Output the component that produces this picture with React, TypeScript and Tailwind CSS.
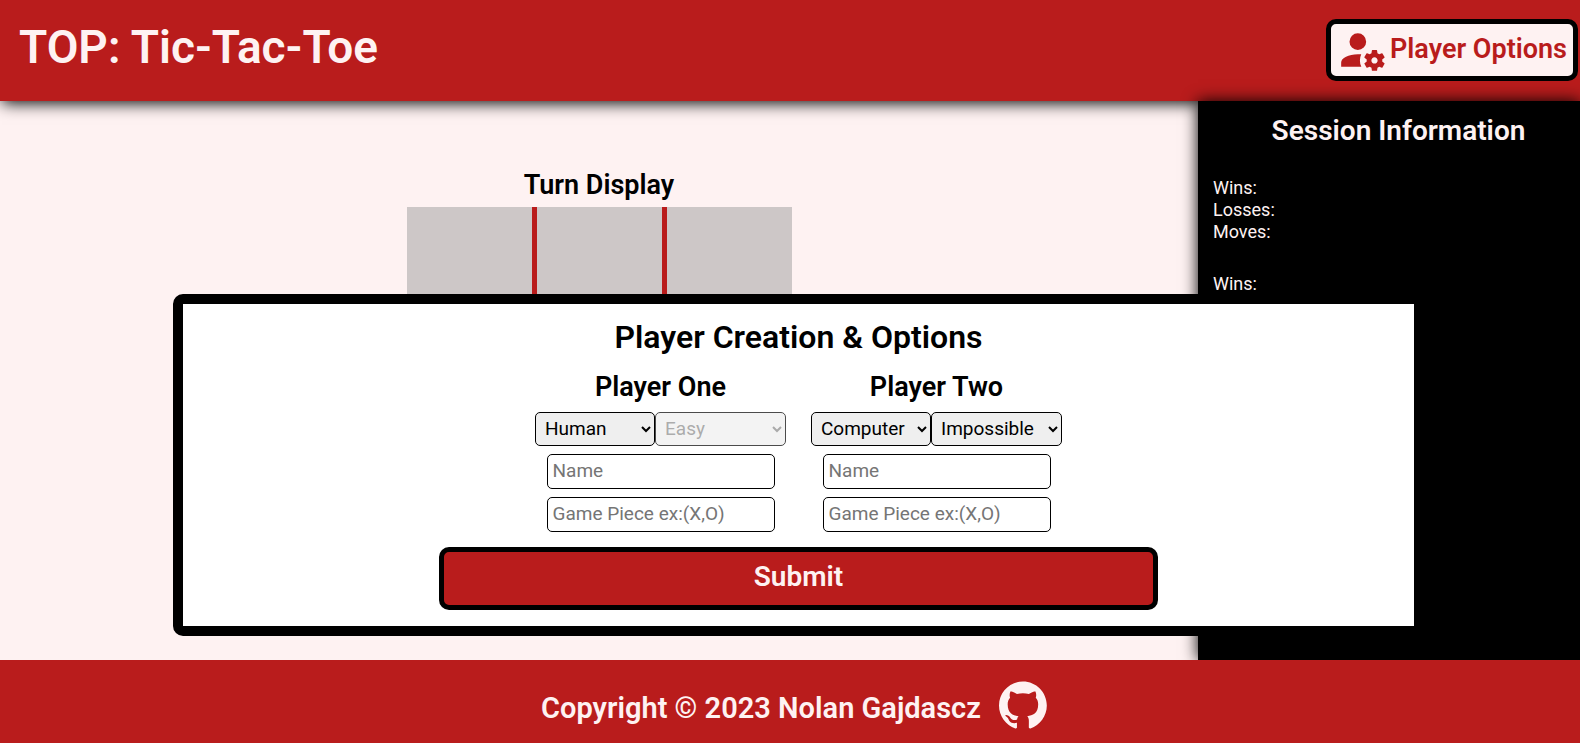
type PlayerProps = {
  title: string;
  id: string;
  kind: string;
  level: string;
  levelDisabled?: boolean;
};

const field =
  "h-[35px] w-[228px] rounded-[5px] border border-black bg-white px-[5px] pb-[2px] text-[19px] text-black placeholder:text-[#757575]";
const dropdown =
  "h-[34px] rounded-[5px] border border-black bg-[#efefef] px-[5px] pb-[2px] text-[19px] text-black disabled:opacity-70 disabled:text-[#6d6d6d]/80";

function AccountCogIcon() {
  return (
    <svg viewBox="0 0 24 24" fill="currentColor" aria-hidden="true" className="size-[50px]">
      <path d="M10 4A4 4 0 0 0 6 8A4 4 0 0 0 10 12A4 4 0 0 0 14 8A4 4 0 0 0 10 4M17 12C16.87 12 16.76 12.09 16.74 12.21L16.55 13.53C16.25 13.66 15.96 13.82 15.7 14L14.46 13.5C14.35 13.5 14.22 13.5 14.15 13.63L13.15 15.36C13.09 15.47 13.11 15.6 13.21 15.68L14.27 16.5C14.25 16.67 14.24 16.83 14.24 17C14.24 17.17 14.25 17.33 14.27 17.5L13.21 18.32C13.12 18.4 13.09 18.53 13.15 18.64L14.15 20.37C14.21 20.5 14.34 20.5 14.46 20.5L15.7 20C15.96 20.18 16.24 20.35 16.55 20.47L16.74 21.79C16.76 21.91 16.86 22 17 22H19C19.11 22 19.22 21.91 19.24 21.79L19.43 20.47C19.73 20.34 20 20.18 20.27 20L21.5 20.5C21.63 20.5 21.76 20.5 21.83 20.37L22.83 18.64C22.89 18.53 22.86 18.4 22.77 18.32L21.7 17.5C21.73 17.33 21.74 17.17 21.74 17C21.74 16.83 21.73 16.67 21.7 16.5L22.76 15.68C22.85 15.6 22.88 15.47 22.82 15.36L21.82 13.63C21.76 13.5 21.63 13.5 21.5 13.5L20.27 14C20 13.82 19.73 13.65 19.42 13.53L19.23 12.21C19.22 12.09 19.11 12 19 12H17M10 14C5.58 14 2 15.79 2 18V20H11.68A7 7 0 0 1 11 17A7 7 0 0 1 11.64 14.09C11.11 14.03 10.56 14 10 14M18 15.5C18.83 15.5 19.5 16.17 19.5 17C19.5 17.83 18.83 18.5 18 18.5C17.16 18.5 16.5 17.83 16.5 17C16.5 16.17 17.17 15.5 18 15.5Z" />
    </svg>
  );
}

function GithubIcon() {
  return (
    <svg viewBox="0 0 98 96" fill="currentColor" aria-hidden="true" className="size-12">
      <path
        fillRule="evenodd"
        clipRule="evenodd"
        d="M48.854 0C21.839 0 0 22 0 49.217c0 21.756 13.993 40.172 33.405 46.69 2.427.49 3.316-1.059 3.316-2.362 0-1.141-.08-5.052-.08-9.127-13.59 2.934-16.42-5.867-16.42-5.867-2.184-5.704-5.42-7.17-5.42-7.17-4.448-3.015.324-3.015.324-3.015 4.934.326 7.523 5.052 7.523 5.052 4.367 7.496 11.404 5.378 14.235 4.074.404-3.178 1.699-5.378 3.074-6.6-10.839-1.141-22.243-5.378-22.243-24.283 0-5.378 1.94-9.778 5.014-13.2-.485-1.222-2.184-6.275.486-13.038 0 0 4.125-1.304 13.426 5.052a46.97 46.97 0 0 1 12.214-1.63c4.125 0 8.33.571 12.213 1.63 9.302-6.356 13.427-5.052 13.427-5.052 2.67 6.763.97 11.816.485 13.038 3.155 3.422 5.015 7.822 5.015 13.2 0 18.905-11.404 23.06-22.324 24.283 1.78 1.548 3.316 4.481 3.316 9.126 0 6.6-.08 11.897-.08 13.526 0 1.304.89 2.853 3.316 2.364 19.412-6.52 33.405-24.935 33.405-46.691C97.707 22 75.788 0 48.854 0z"
      />
    </svg>
  );
}

function PlayerFields({ title, id, kind, level, levelDisabled }: PlayerProps) {
  return (
    <fieldset className="flex flex-col items-center gap-2">
      <legend className="mx-auto mb-2 pt-px text-[27px] leading-[34px] font-semibold">{title}</legend>
      <div className="flex">
        <select aria-label={`${title} type`} defaultValue={kind} className={`${dropdown} w-[120px]`}>
          <option>Human</option>
          <option>Computer</option>
        </select>
        <select
          aria-label={`${title} difficulty`}
          defaultValue={level}
          disabled={levelDisabled}
          className={`${dropdown} w-[131px]`}
        >
          <option>Easy</option>
          <option>Impossible</option>
        </select>
      </div>
      <input id={`${id}-name`} aria-label={`${title} name`} placeholder="Name" className={field} />
      <input id={`${id}-piece`} aria-label={`${title} game piece`} placeholder="Game Piece ex:(X,O)" className={field} />
    </fieldset>
  );
}

export default function App() {
  return (
    <div className="relative flex min-h-screen flex-col bg-red-50 font-[Roboto,sans-serif] text-black">
      <header className="relative flex h-[101px] items-start justify-between bg-[#b91c1c] pt-[19px] pr-[2px] pl-[19px] shadow-[2px_2px_15px_black]">
        <h1 className="text-[46px] leading-[56px] font-semibold text-red-50">TOP: Tic-Tac-Toe</h1>
        <button className="flex h-[62px] items-center gap-[3px] rounded-[10px] border-5 border-black bg-red-50 px-[6px] text-[27px] font-semibold text-[#b91c1c]">
          <AccountCogIcon />
          <span className="pb-[2px]">Player Options</span>
        </button>
      </header>

      <div className="flex flex-1">
        <main className="flex flex-1 flex-col items-center pt-[67px]">
          <h2 className="pb-[5px] text-[27px] leading-[34px] font-semibold">Turn Display</h2>
          <div className="grid size-[385px] grid-cols-3 grid-rows-3 gap-[5px] bg-[#b91c1c]">
            {Array.from({ length: 9 }, (_, cell) => (
              <button key={cell} aria-label={`Cell ${cell + 1}`} className="bg-[#cdc7c7]" />
            ))}
          </div>
        </main>
        <aside className="relative w-[382px] bg-black px-[15px] pt-[13px] text-[18px] leading-[22px] text-red-50 shadow-[0_0_15px_black]">
          <h2 className="pl-[19px] text-center text-[28px] leading-[34px] font-semibold">Session Information</h2>
          <ul className="mt-[29px]">
            <li>Wins:</li>
            <li>Losses:</li>
            <li>Moves:</li>
          </ul>
          <ul className="mt-[30px]">
            <li>Wins:</li>
            <li>Losses:</li>
            <li>Moves:</li>
          </ul>
        </aside>
      </div>

      <footer className="relative flex h-[83px] items-center justify-center gap-[18px] bg-[#b91c1c] pt-[7px] pl-2 text-red-50">
        <p className="pt-[5px] text-[29px] leading-[34px] font-semibold">Copyright © 2023 Nolan Gajdascz</p>
        <a href="https://github.com/" aria-label="GitHub">
          <GithubIcon />
        </a>
      </footer>

      <div
        role="dialog"
        aria-labelledby="options-title"
        className="absolute top-[294px] right-[156px] left-[173px] rounded-[10px] border-10 border-black bg-white"
      >
        <form className="flex flex-col items-center pt-[14px] pb-4">
          <h2 id="options-title" className="text-[32px] leading-[38px] font-semibold">
            Player Creation &amp; Options
          </h2>
          <div className="mt-[13px] flex gap-[25px]">
            <PlayerFields title="Player One" id="one" kind="Human" level="Easy" levelDisabled />
            <PlayerFields title="Player Two" id="two" kind="Computer" level="Impossible" />
          </div>
          <button
            type="button"
            className="mt-[15px] h-[63px] w-[719px] max-w-full rounded-[10px] border-5 border-black bg-[#b91c1c] pb-1 text-[28px] font-semibold text-red-50"
          >
            Submit
          </button>
        </form>
      </div>
    </div>
  );
}
